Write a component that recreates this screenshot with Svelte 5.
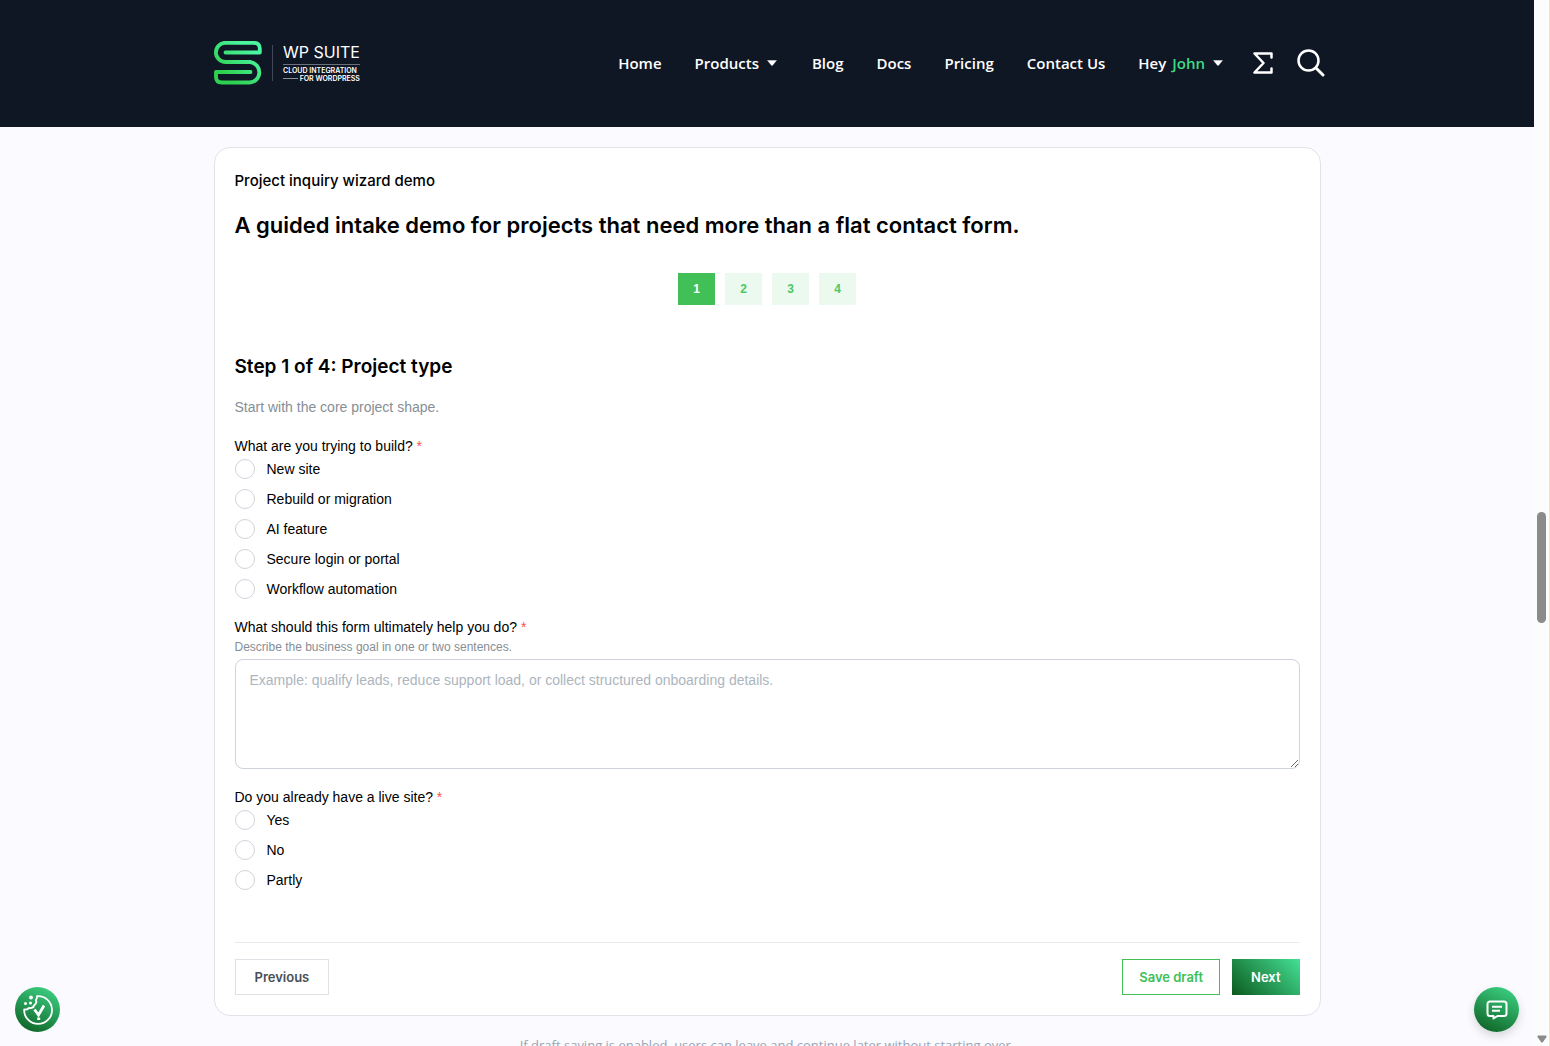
<script>
  const steps = [1, 2, 3, 4];
  let current = $state(1);
  let kind = $state('');
  let live = $state('');
  let goal = $state('');
  const kinds = ['New site', 'Rebuild or migration', 'AI feature', 'Secure login or portal', 'Workflow automation'];
  const answers = ['Yes', 'No', 'Partly'];
</script>

{#snippet caret()}
  <svg class="caret" viewBox="-2 0 14 6" aria-hidden="true"><path d="M.5.5h9L5.6 5.2a.8.8 0 0 1-1.2 0z" fill="#fff" stroke="#fff" stroke-width=".4" /></svg>
{/snippet}

{#snippet choices(name, legend, list, value, pick)}
  <fieldset>
    <legend class="label">{legend} <span class="req">*</span></legend>
    <div class="options">
      {#each list as item}
        <label class="option">
          <input type="radio" {name} value={item} checked={value === item} onchange={() => pick(item)} />
          <span>{item}</span>
        </label>
      {/each}
    </div>
  </fieldset>
{/snippet}

<div class="shell">
  <div class="page">
    <header>
      <div class="bar">
        <a class="logo" href="#home" aria-label="WP Suite">
          <svg class="mark" viewBox="0 0 48 44" aria-hidden="true">
            <defs>
              <linearGradient id="brand" x1="0" y1="1" x2="1" y2="0">
                <stop offset="0.2" stop-color="#2ed14f" />
                <stop offset="0.8" stop-color="#4bf5a0" />
              </linearGradient>
            </defs>
            <path d="M11.5 11.5H45.800V7.5Q45.800 1.8 39.500 1.800H11.500A9.600 9.600 0 0 0 11.500 21H36.500M36.500 31H2V36Q2 41.500 8 41.500H35.500A10.200 10.200 0 0 0 36.500 21.200" fill="none" stroke="url(#brand)" stroke-width="3.800" stroke-linecap="round" stroke-linejoin="round" />
          </svg>
          <span class="rule"></span>
          <span class="words">
            <span class="name">WP SUITE</span>
            <span class="tag">CLOUD INTEGRATION</span>
            <span class="tag end">FOR WORDPRESS</span>
          </span>
        </a>
        <nav>
          <a href="#home">Home</a>
          <a href="#products">Products {@render caret()}</a>
          <a href="#blog">Blog</a>
          <a href="#docs">Docs</a>
          <a href="#pricing">Pricing</a>
          <a href="#contact">Contact Us</a>
          <a href="#account"><span class="greeting">Hey <span class="user">John</span></span> {@render caret()}</a>
          <button class="icon sum" aria-label="Summary">
            <svg width="20" height="22" viewBox="0 0 20 22"><path d="M18.500 5.500V1.500H1.500L10.500 11L1.500 20.500H18.500V16.500" fill="none" stroke="#fff" stroke-width="2.500" stroke-linejoin="round" stroke-linecap="round" /></svg>
          </button>
          <button class="icon search" aria-label="Search">
            <svg width="28" height="28" viewBox="0 0 28 28"><circle cx="11.500" cy="11.500" r="10" fill="none" stroke="#fff" stroke-width="2.500" /><path d="M19 19l7 7" stroke="#fff" stroke-width="3" stroke-linecap="round" /></svg>
          </button>
        </nav>
      </div>
    </header>

    <main>
      <form class="card" onsubmit={(e) => e.preventDefault()}>
        <p class="eyebrow">Project inquiry wizard demo</p>
        <h1>A guided intake demo for projects that need more than a flat contact form.</h1>
        <div class="steps">
          {#each steps as n}
            <button type="button" class:active={n === current} onclick={() => (current = n)}>{n}</button>
          {/each}
        </div>
        <h2>Step 1 of 4: Project type</h2>
        <p class="intro">Start with the core project shape.</p>

        {@render choices('kind', 'What are you trying to build?', kinds, kind, (v) => (kind = v))}

        <div class="field">
          <label class="label" for="goal">What should this form ultimately help you do? <span class="req">*</span></label>
          <p class="hint" id="goal-hint">Describe the business goal in one or two sentences.</p>
          <textarea id="goal" aria-describedby="goal-hint" bind:value={goal} placeholder="Example: qualify leads, reduce support load, or collect structured onboarding details."></textarea>
        </div>

        {@render choices('live', 'Do you already have a live site?', answers, live, (v) => (live = v))}

        <div class="actions">
          <button type="button" class="btn previous">Previous</button>
          <button type="button" class="btn draft">Save draft</button>
          <button type="submit" class="btn next">Next</button>
        </div>
      </form>
      <p class="note">If draft saving is enabled, users can leave and continue later without starting over.</p>
    </main>
  </div>

  <div class="track" aria-hidden="true">
    <span class="thumb"></span>
    <svg class="down" width="10" height="8" viewBox="0 0 10 8"><path d="M1 .5h8q1 .5.500 1.500L6 7q-1 1-2 0L.5 2Q0 1 1 .5z" fill="#8b8b8b" /></svg>
  </div>

  <button class="float cookie" aria-label="Cookie settings">
    <svg width="30" height="30" viewBox="0 0 30 30" fill="none" stroke="#fff">
      <path d="M14 1.200A13.900 13.900 0 1 1 1.200 14.500Q4 15 6 13Q10.500 13.500 11 10.500Q14.500 8 12.800 5Q14.500 3 14 1.200Z" stroke-width="1.800" stroke-linejoin="round" />
      <path d="M11.500 14.500l4 5.500L21 10.500" stroke-width="2.800" />
      <path d="M14.200 22.500h3v2.500h-3z" fill="#fff" stroke="none" />
      <g fill="#fff" stroke="none"><circle cx="8" cy="2.500" r="1.900" /><circle cx="2.500" cy="8.500" r="1.500" /><circle cx="7.500" cy="8" r="1.500" /></g>
    </svg>
  </button>
  <button class="float chat" aria-label="Open chat">
    <svg width="22" height="20" viewBox="0 0 22 20" fill="none" stroke="#fff" stroke-width="2" stroke-linejoin="round">
      <path d="M4 1.500h14a2.500 2.500 0 0 1 2.500 2.500v9.500A2.500 2.500 0 0 1 18 16h-6.500l-4 2.500V16H4a2.500 2.500 0 0 1-2.500-2.500V4A2.500 2.500 0 0 1 4 1.500z" />
      <path d="M6 6.800h10M6 10.800h8" />
    </svg>
  </button>
</div>

<style>
  :global(body) {
    margin: 0;
    background: #fafaff;
  }
  * {
    box-sizing: border-box;
  }
  .shell {
    display: grid;
    grid-template-columns: minmax(0, 1fr) 16px;
    height: 100vh;
    overflow: hidden;
    font-family: 'Liberation Sans', Arial, sans-serif;
    font-size: 14px;
    line-height: 20px;
    color: #000;
  }
  .page {
    overflow: hidden;
  }
  p, h1, h2 {
    margin: 0;
  }
  button {
    font: inherit;
    border: 0;
    cursor: pointer;
  }
  header {
    background: #0f1624;
    border-bottom: 1px solid #0f1624;
    color: #fff;
  }
  .bar {
    display: flex;
    align-items: center;
    justify-content: space-between;
    max-width: 1116px;
    height: 126px;
    margin: 0 auto;
    padding-left: 5px;
  }
  .logo {
    display: flex;
    align-items: center;
    color: #fff;
    text-decoration: none;
  }
  .mark {
    width: 48px;
    height: 44px;
  }
  .rule {
    width: 1px;
    height: 36px;
    margin: 0 10px;
    background: #414857;
  }
  .words {
    display: flex;
    flex-direction: column;
    padding-bottom: 2px;
    font-family: Inter, sans-serif;
  }
  .name {
    padding-bottom: 2px;
    margin-bottom: 2px;
    border-bottom: 1px solid #6a707c;
    font-size: 16px;
    line-height: 20px;
  }
  .tag {
    font-size: 7px;
    font-weight: 600;
    line-height: 8px;
  }
  .end {
    display: flex;
    align-items: center;
    gap: 2px;
  }
  .end::before {
    content: '';
    flex: 1;
    height: 1px;
    background: #8b909a;
  }
  nav {
    display: flex;
    align-items: center;
    gap: 33px;
    font-family: 'Open Sans', sans-serif;
    font-size: 15px;
    font-weight: 600;
  }
  nav a {
    display: flex;
    align-items: center;
    gap: 6px;
    color: #fff;
    text-decoration: none;
    white-space: nowrap;
  }
  .greeting {
    display: flex;
    gap: 6px;
  }
  .user {
    color: #3ddc84;
  }
  .caret {
    width: 14px;
    height: 6px;
  }
  .icon {
    display: flex;
    padding: 0;
    background: none;
  }
  .sum {
    margin-left: -5px;
  }
  .search {
    margin-left: -9px;
  }
  main {
    max-width: 1147px;
    margin: 0 auto;
    padding: 20px 20px 0;
  }
  .card {
    padding: 21px 20px 20px;
    background: #fff;
    border: 1px solid #e1e3e9;
    border-radius: 16px;
  }
  .eyebrow,
  h1,
  h2,
  .btn {
    font-family: Inter, 'Liberation Sans', sans-serif;
  }
  .eyebrow {
    font-size: 15px;
    font-weight: 500;
    line-height: 24px;
  }
  h1 {
    margin-top: 16px;
    font-size: 22px;
    font-weight: 600;
    line-height: 32px;
  }
  .steps {
    display: flex;
    justify-content: center;
    gap: 10px;
    margin-top: 32px;
  }
  .steps button {
    width: 37px;
    height: 32px;
    padding: 0;
    background: #ebf9ee;
    color: #4fc765;
    font-size: 12px;
    font-weight: 700;
  }
  .steps .active {
    background: #40c057;
    color: #fff;
  }
  h2 {
    margin-top: 48px;
    font-size: 19px;
    font-weight: 600;
    line-height: 28px;
  }
  .intro {
    margin: 16px 0 19px;
    color: #868e96;
  }
  fieldset {
    margin: 0;
    padding: 0;
    border: 0;
  }
  .label {
    display: block;
    padding: 0;
    line-height: 20px;
  }
  .req {
    color: #fa5252;
  }
  .options {
    display: grid;
    gap: 10px;
    padding-top: 3px;
  }
  .option {
    display: flex;
    align-items: center;
    gap: 12px;
    width: fit-content;
  }
  input {
    appearance: none;
    width: 20px;
    height: 20px;
    margin: 0;
    border: 1px solid #ced4da;
    border-radius: 50%;
    background: #fff;
  }
  input:checked {
    border: 6px solid #40c057;
  }
  .field {
    margin: 18px 0;
  }
  .hint {
    color: #868e96;
    font-size: 12px;
  }
  textarea {
    display: block;
    width: 100%;
    height: 110px;
    margin-top: 2px;
    padding: 10px 14px;
    border: 1px solid #ced4da;
    border-radius: 8px;
    background: #fff;
    font: inherit;
    resize: vertical;
  }
  textarea::placeholder {
    color: #adb5bd;
  }
  .actions {
    display: flex;
    gap: 12px;
    margin-top: 52px;
    padding-top: 16px;
    border-top: 1px solid #e9ecef;
  }
  .btn {
    height: 36px;
    padding: 0 19px;
    border: 1px solid #dee2e6;
    background: #fff;
    font-size: 13px;
    font-weight: 600;
  }
  .previous {
    margin-right: auto;
    color: #495057;
  }
  .draft {
    padding: 0 16px;
    border-color: #40c057;
    color: #40c057;
  }
  .next {
    border: 0;
    background: linear-gradient(45deg, #0b5a1e, #45e095);
    color: #fff;
  }
  .note {
    margin-top: 19px;
    text-align: center;
    color: #9aa5b5;
    font-family: 'Open Sans', sans-serif;
    font-size: 13px;
  }
  .track {
    display: flex;
    flex-direction: column;
    align-items: center;
    justify-content: space-between;
    padding: 512px 0 3px;
    background: #fcfcfc;
    border-right: 1px solid #f3e3cd;
  }
  .thumb {
    width: 9px;
    height: 111px;
    border-radius: 5px;
    background: #8b8b8b;
  }
  .float {
    position: fixed;
    bottom: 14px;
    display: flex;
    align-items: center;
    justify-content: center;
    width: 45px;
    height: 45px;
    padding: 0;
    border-radius: 50%;
    background: linear-gradient(25deg, #0b5a1e, #3fd98a);
  }
  .cookie {
    left: 15px;
  }
  .chat {
    right: 31px;
    box-shadow: 0 4px 10px rgb(0 0 0 / 15%);
  }
</style>
